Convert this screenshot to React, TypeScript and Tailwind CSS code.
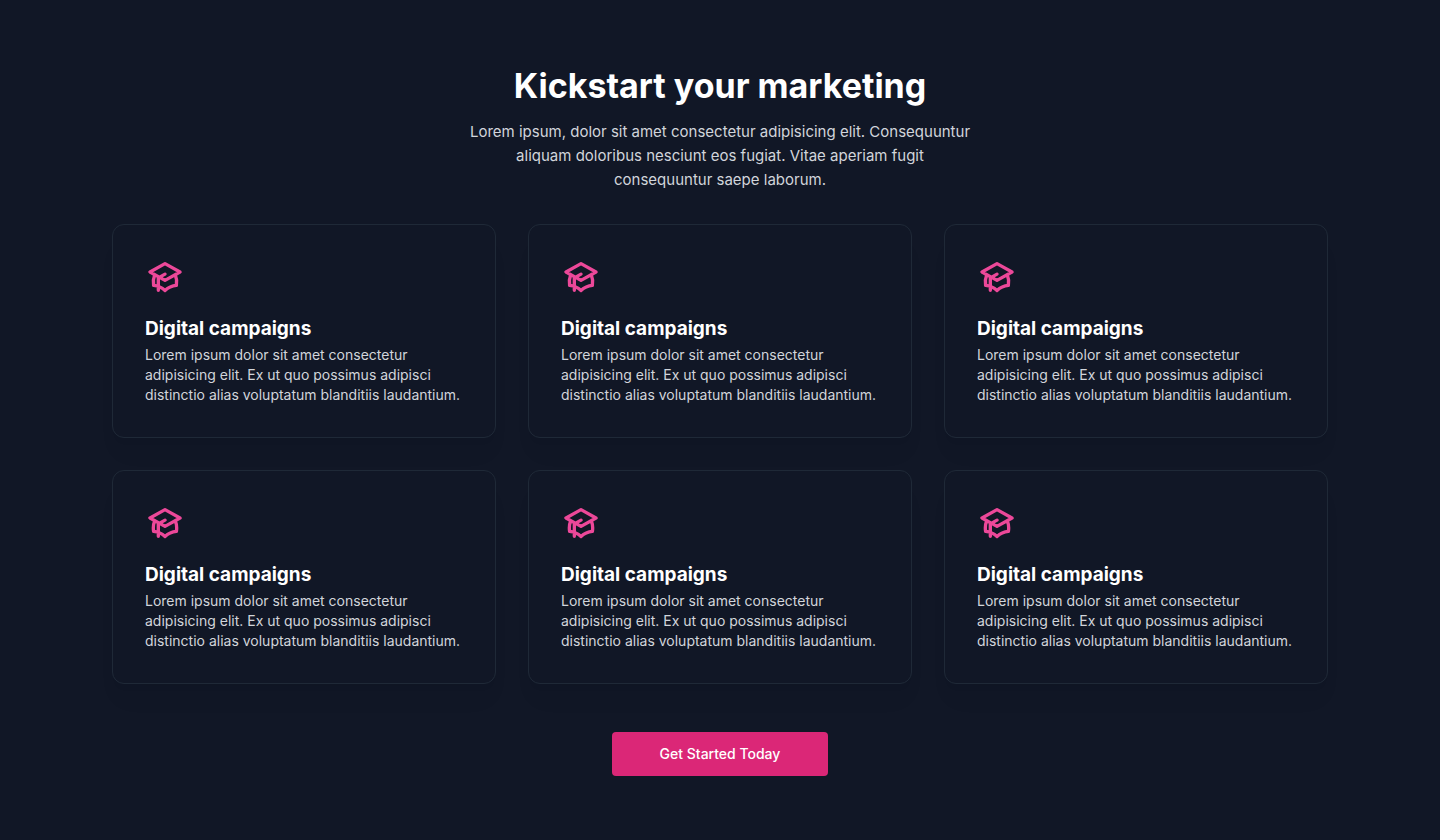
const cards = Array.from({ length: 6 }, (_, id) => ({
  id,
  title: 'Digital campaigns',
  text: 'Lorem ipsum dolor sit amet consectetur adipisicing elit. Ex ut quo possimus adipisci distinctio alias voluptatum blanditiis laudantium.',
}));

function CampaignIcon() {
  return (
    <svg aria-hidden="true" className="size-10 text-[#ec4899]" fill="none" viewBox="0 0 24 24" stroke="currentColor">
      <path d="M12 14l9-5-9-5-9 5 9 5z" />
      <path d="M12 14l6.16-3.422a12.083 12.083 0 01.665 6.479A11.952 11.952 0 0012 20.055a11.952 11.952 0 00-6.824-2.998 12.078 12.078 0 01.665-6.479L12 14z" />
      <path
        strokeWidth="2"
        strokeLinecap="round"
        strokeLinejoin="round"
        d="M12 14l9-5-9-5-9 5 9 5zm0 0l6.16-3.422a12.083 12.083 0 01.665 6.479A11.952 11.952 0 0012 20.055a11.952 11.952 0 00-6.824-2.998 12.078 12.078 0 01.665-6.479L12 14zm-4 6v-7.5l4-2.222"
      />
    </svg>
  );
}

export default function App() {
  return (
    <section className="min-h-screen bg-[#111726] font-['Inter',sans-serif] text-white">
      <div className="mx-auto max-w-7xl px-8 py-16">
        <div className="mx-auto max-w-lg text-center">
          <h2 className="text-[34px] leading-[44px] font-bold">Kickstart your marketing</h2>
          <p className="mt-3 text-[15px] leading-6 text-[#d1d5db]">
            Lorem ipsum, dolor sit amet consectetur adipisicing elit. Consequuntur{' '}
            <br className="hidden sm:block" />
            aliquam doloribus nesciunt eos fugiat. Vitae aperiam fugit{' '}
            <br className="hidden sm:block" />
            consequuntur saepe laborum.
          </p>
        </div>
        <div className="mt-8 grid gap-8 md:grid-cols-2 lg:grid-cols-3">
          {cards.map((card) => (
            <a key={card.id} href="#" className="block rounded-xl border border-[#1f2937] p-8 shadow-xl shadow-black/3">
              <CampaignIcon />
              <h3 className="mt-4 text-[19px] leading-8 font-bold">{card.title}</h3>
              <p className="text-sm text-[#d1d5db]">{card.text}</p>
            </a>
          ))}
        </div>
        <div className="mt-12 text-center">
          <a href="#" className="inline-flex items-center rounded-sm bg-[#db2777] px-12 py-3 text-sm font-medium">
            Get Started Today
          </a>
        </div>
      </div>
    </section>
  );
}
